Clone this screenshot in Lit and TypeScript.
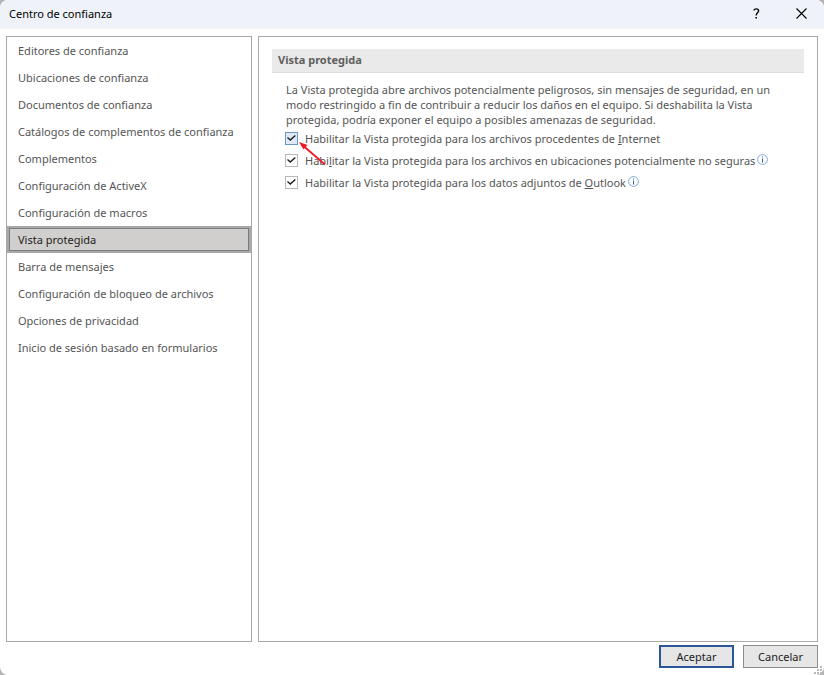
import { LitElement, html, css, nothing } from "lit";
import type { TemplateResult } from "lit";
import { customElement, state } from "lit/decorators.js";
import { classMap } from "lit/directives/class-map.js";

interface Option {
  id: string;
  label: TemplateResult;
  info: boolean;
  hot: boolean;
}

const SECTIONS = [
  "Editores de confianza",
  "Ubicaciones de confianza",
  "Documentos de confianza",
  "Catálogos de complementos de confianza",
  "Complementos",
  "Configuración de ActiveX",
  "Configuración de macros",
  "Vista protegida",
  "Barra de mensajes",
  "Configuración de bloqueo de archivos",
  "Opciones de privacidad",
  "Inicio de sesión basado en formularios",
];

const OPTIONS: Option[] = [
  {
    id: "internet",
    label: html`Habilitar la Vista protegida para los archivos procedentes de <u>I</u>nternet`,
    info: false,
    hot: true,
  },
  {
    id: "ubicaciones",
    label: html`Habi<u>l</u>itar la Vista protegida para los archivos en ubicaciones potencialmente no seguras`,
    info: true,
    hot: false,
  },
  {
    id: "outlook",
    label: html`Habilitar la Vista protegida para los datos adjuntos de <u>O</u>utlook`,
    info: true,
    hot: false,
  },
];

@customElement("app-root")
export class AppRoot extends LitElement {
  @state() private selected = "Vista protegida";

  static styles = css`
    :host {
      display: block;
      background: #b4b4b4;
      font-family: "Noto Sans", "Open Sans", sans-serif;
      font-size: 11px;
      line-height: 15px;
      color: #555;
    }
    * {
      box-sizing: border-box;
    }
    button {
      font: inherit;
      color: inherit;
      padding: 0;
      margin: 0;
      border: 0;
      border-radius: 0;
      background: none;
    }
    .dialog {
      position: relative;
      display: flex;
      flex-direction: column;
      min-height: 100vh;
      border-radius: 8px;
      background: #fff;
      overflow: hidden;
    }
    .titlebar {
      display: flex;
      align-items: center;
      height: 29px;
      padding: 0 0 2px 9px;
      background: #eff3f9;
      color: #000;
    }
    .title {
      flex: 1;
      margin: 0;
      font-size: 11px;
      font-weight: 400;
    }
    .tool {
      display: flex;
      align-items: center;
      justify-content: center;
      width: 45px;
      height: 27px;
      color: #000;
    }
    .body {
      flex: 1;
      display: grid;
      grid-template-columns: 246px 1fr;
      gap: 6px;
      padding: 7px 6px 0;
    }
    .panel {
      border: 1px solid #a8a8a8;
    }
    .nav {
      display: flex;
      flex-direction: column;
    }
    .item {
      height: 27px;
      padding: 0 9px;
      border: 2px solid transparent;
      text-align: left;
      white-space: nowrap;
    }
    .item.on {
      border-color: #a8a8a8;
      background: #d1cfcd;
      outline: 1px solid #7c7c7c;
      outline-offset: -3px;
      color: #222;
    }
    .content {
      padding: 12px 13px;
    }
    .heading {
      margin: 0;
      height: 24px;
      padding: 0 6px;
      border-bottom: 1px solid #dedede;
      background: #eaeaea;
      font-size: 11px;
      line-height: 21px;
      font-weight: 700;
      color: #606060;
    }
    .intro {
      margin: 0;
      padding: 9px 14px 0;
    }
    .options {
      position: relative;
      padding-left: 13px;
    }
    .option {
      display: flex;
      align-items: center;
      height: 22px;
      white-space: nowrap;
    }
    .check {
      appearance: none;
      display: grid;
      place-items: center;
      width: 13px;
      height: 13px;
      margin: 0 7px 0 0;
      border: 1px solid #b8b8b8;
      background: #fff;
    }
    .check.hot {
      border-color: #6a95c8;
      background: #dfe9f8;
    }
    .check:checked::after {
      content: "";
      width: 9px;
      height: 7px;
      background: #222;
      clip-path: polygon(0 50%, 10% 36%, 36% 66%, 88% 6%, 98% 20%, 37% 94%);
    }
    .info {
      width: 11px;
      height: 11px;
      margin: 0 0 2px 2px;
    }
    .arrow {
      position: absolute;
      left: 27px;
      top: 15px;
      width: 28px;
      height: 24px;
      pointer-events: none;
    }
    .footer {
      display: flex;
      justify-content: flex-end;
      gap: 9px;
      padding: 3px 6px 7px;
    }
    .action {
      width: 75px;
      height: 23px;
      border: 1px solid #8c8c8c;
      background: #e6e6e6;
      color: #222;
    }
    .action.primary {
      border: 2px solid #2b579a;
    }
    .grip {
      position: absolute;
      right: 1px;
      bottom: 0;
      width: 10px;
      height: 10px;
    }
  `;

  private renderInfo() {
    return html`<svg class="info" viewBox="0 0 11 11" role="img" aria-label="Información">
      <circle cx="5.5" cy="5.5" r="4.9" fill="#fff" stroke="#7fa6da" stroke-width="1" />
      <path d="M5 2.5h1v1H5zM5 4.5h1v4H5z" fill="#3b5f96" />
    </svg>`;
  }

  private renderOption(o: Option) {
    return html`<div class="option">
      <input class=${classMap({ check: true, hot: o.hot })} type="checkbox" id=${o.id} checked />
      <label for=${o.id}>${o.label}</label>
      ${o.info ? this.renderInfo() : nothing}
    </div>`;
  }

  render() {
    return html`
      <div class="dialog" role="dialog" aria-labelledby="title">
        <header class="titlebar">
          <h1 class="title" id="title">Centro de confianza</h1>
          <button class="tool" aria-label="Ayuda">
            <svg width="7" height="11" viewBox="0 0 7 11" fill="none" stroke="#000" stroke-width="1.4">
              <path d="M1 2.6C1 .3 5.6.2 5.6 2.8 5.6 4.8 3.2 4.7 3.2 7.4" />
              <path d="M2.4 9h1.6v1.4H2.4z" fill="#000" stroke="none" />
            </svg>
          </button>
          <button class="tool" aria-label="Cerrar">
            <svg width="11" height="11" viewBox="0 0 11 11" fill="none" stroke="#000" stroke-width="1.1">
              <path d="M.5.5l10 10M10.5.5l-10 10" />
            </svg>
          </button>
        </header>
        <div class="body">
          <nav class="panel nav">
            ${SECTIONS.map(
              (s) => html`<button
                class=${classMap({ item: true, on: s === this.selected })}
                @click=${() => (this.selected = s)}
              >${s}</button>`
            )}
          </nav>
          <main class="panel content">
            <h2 class="heading">Vista protegida</h2>
            <p class="intro">
              La Vista protegida abre archivos potencialmente peligrosos, sin mensajes de seguridad, en un
              modo restringido a fin de contribuir a reducir los daños en el equipo. Si deshabilita la Vista
              protegida, podría exponer el equipo a posibles amenazas de seguridad.
            </p>
            <div class="options">
              ${OPTIONS.map((o) => this.renderOption(o))}
              <svg class="arrow" viewBox="0 0 28 24" aria-hidden="true">
                <path d="M5 4.5L26 22.5" stroke="#ed1c24" stroke-width="1.8" />
                <path d="M0 0L8.5 3L4.5 7.5z" fill="#ed1c24" />
              </svg>
            </div>
          </main>
        </div>
        <footer class="footer">
          <button class="action primary">Aceptar</button>
          <button class="action">Cancelar</button>
        </footer>
        <svg class="grip" viewBox="0 0 10 10" aria-hidden="true">
          <path d="M7 1h2v2H7zM4 4h2v2H4zM7 4h2v2H7zM1 7h2v2H1zM4 7h2v2H4zM7 7h2v2H7z" fill="#b8b8b8" />
        </svg>
      </div>
    `;
  }
}
